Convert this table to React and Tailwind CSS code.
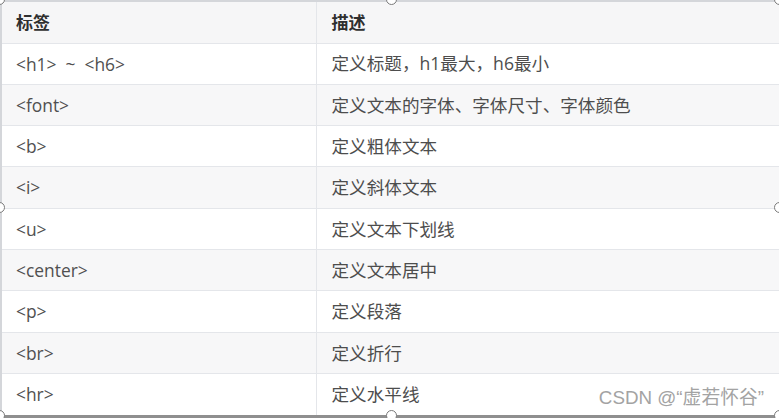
import React from 'react';

const rows = [
  { tag: '<h1>  ~  <h6>', desc: '定义标题，h1最大，h6最小' },
  { tag: '<font>', desc: '定义文本的字体、字体尺寸、字体颜色' },
  { tag: '<b>', desc: '定义粗体文本' },
  { tag: '<i>', desc: '定义斜体文本' },
  { tag: '<u>', desc: '定义文本下划线' },
  { tag: '<center>', desc: '定义文本居中' },
  { tag: '<p>', desc: '定义段落' },
  { tag: '<br>', desc: '定义折行' },
  { tag: '<hr>', desc: '定义水平线' },
];

// resize handles drawn over the table frame
const Handle = ({ className }) => (
  <span className={`absolute w-[11px] h-[11px] rounded-full bg-white border border-[#7a7a7a] ${className}`} />
);

const App = () => {
  return (
    <div
      className="relative w-[779px] h-[418px] bg-white overflow-hidden"
      style={{ fontFamily: '"Open Sans", "Noto Sans CJK SC", sans-serif' }}
    >
      <div className="w-[779px] border-t-2 border-l-2 border-t-[#d4d6da] border-l-[#d4d6da] border-b-[3px] border-b-[#8f8f8f]">
        <table className="w-full border-collapse table-fixed">
          <colgroup>
            <col className="w-[314px]" />
            <col />
          </colgroup>
          <thead>
            <tr className="h-[41px] bg-[#f6f6f7] border-b border-[#e4e6ea]">
              <th className="text-left font-bold text-[17px] text-[#2f2f2f] pl-[14px] border-r border-[#e4e6ea]">标签</th>
              <th className="text-left font-bold text-[17px] text-[#2f2f2f] pl-[15px]">描述</th>
            </tr>
          </thead>
          <tbody>
            {rows.map((row, i) => (
              <tr
                key={i}
                className={`h-[41.3px] border-b border-[#e4e6ea] last:border-b-0 ${i % 2 === 1 ? 'bg-[#f7f7f8]' : 'bg-white'}`}
              >
                <td className="text-[17.4px] text-[#505050] pl-[14px] border-r border-[#e4e6ea] whitespace-pre">{row.tag}</td>
                <td className="text-[17.6px] text-[#4d4d4d] pl-[15px]">{row.desc}</td>
              </tr>
            ))}
          </tbody>
        </table>
      </div>

      <span
        className="absolute right-[15px] top-[389px] text-[18.8px] text-[#a3a3a3] leading-none"
        style={{ fontFamily: '"Liberation Sans", "Noto Sans CJK SC", sans-serif' }}
      >
        CSDN @“虚若怀谷”
      </span>

      <Handle className="-left-[6px] -top-[6px]" />
      <Handle className="left-[386px] -top-[6px]" />
      <Handle className="-right-[6px] -top-[6px]" />
      <Handle className="-left-[6px] top-[202px]" />
      <Handle className="-right-[6px] top-[202px]" />
      <Handle className="-left-[6px] top-[410px]" />
      <Handle className="left-[386px] top-[410px]" />
      <Handle className="-right-[6px] top-[410px]" />
    </div>
  );
};

export default App;
